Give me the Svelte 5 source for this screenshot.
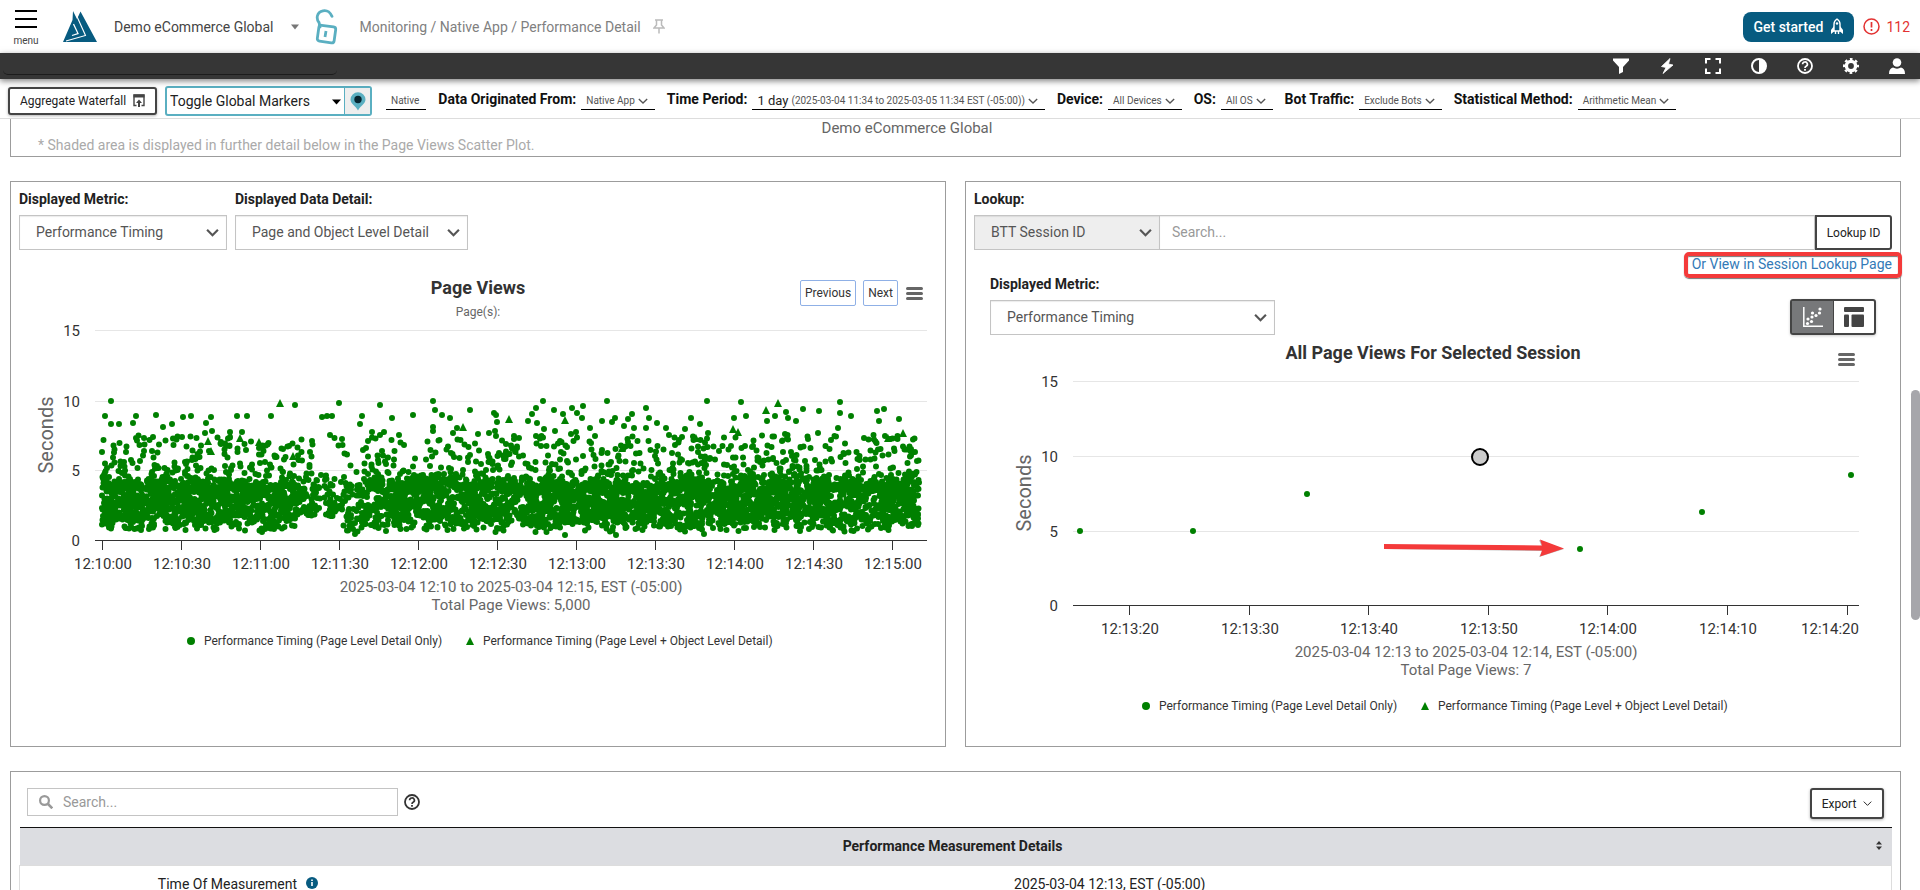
<script>
    let metric = $state("Performance Timing");
    let detail = $state("Page and Object Level Detail");
    let lookupType = $state("BTT Session ID");
    let sessionMetric = $state("Performance Timing");
    let marker = $state("Toggle Global Markers");
    let view = $state("chart");
    let lookup = $state("");
    let search = $state("");

    const filters = [
        { label: "Data Originated From:", value: "Native App" },
        { label: "Time Period:", lead: "1 day", value: "(2025-03-04 11:34 to 2025-03-05 11:34 EST (-05:00))" },
        { label: "Device:", value: "All Devices" },
        { label: "OS:", value: "All OS" },
        { label: "Bot Traffic:", value: "Exclude Bots" },
        { label: "Statistical Method:", value: "Arithmetic Mean" },
    ];

    const legend = [
        "Performance Timing (Page Level Detail Only)",
        "Performance Timing (Page Level + Object Level Detail)",
    ];

    // slowest and fastest views, in chart pixels
    const outliers = [
        [100,141],[94,156],[100,164],[108,164],[122,163],[125,156],[145,155],[152,167],[161,164],[172,157],
        [180,156],[195,163],[200,157],[194,173],[201,171],[219,172],[226,156],[236,156],[231,172],[260,156],
        [284,145],[328,143],[311,157],[316,156],[321,156],[351,156],[349,164],[369,145],[381,158],[361,172],
        [373,172],[402,155],[319,175],[422,141],[424,150],[431,155],[439,158],[459,150],[483,153],[485,155],
        [486,162],[422,167],[422,171],[446,168],[442,173],[467,174],[478,173],[484,171],[525,148],[521,154],
        [517,161],[526,163],[532,141],[543,150],[552,154],[561,148],[566,153],[572,146],[571,158],[596,141],
        [591,161],[604,158],[601,162],[621,154],[617,159],[613,166],[623,168],[635,148],[638,158],[635,168],
        [646,163],[655,168],[658,175],[674,169],[680,158],[689,164],[696,141],[697,173],[730,142],[723,158],
        [735,156],[756,161],[764,156],[775,152],[777,158],[785,161],[792,149],[808,151],[829,142],[829,153],
        [840,156],[827,168],[866,151],[868,161],[873,149],[888,159],[807,173],[774,174],[853,178],[579,168],
        [565,172],[560,174],[544,171],[533,169],[525,176],[554,275],[605,275],[693,274],[344,274],[251,272],
    ];
    const withObjects = [
        [269,143],[452,167],[93,212],[197,181],[200,191],[248,182],[229,178],[282,196],[498,159],[554,160],
        [767,143],[755,150],[722,169],[727,172],[892,173],[877,178],[685,178],[611,188],
    ];

    const dot = ([x, y], r = 3) => `M${x - r} ${y}a${r} ${r} 0 1 0 ${2 * r} 0a${r} ${r} 0 1 0 ${-2 * r} 0`;
    const triangle = ([x, y], r = 4) => `M${x} ${y - r}L${x + r} ${y + r}H${x - r}Z`;

    let seed = 20250304;
    const random = () => {
        seed = (seed * 1664525 + 1013904223) % 4294967296;
        return seed / 4294967296;
    };

    const buildCloud = () => {
        const points = [...outliers];
        while (points.length < 5000) {
            const x = 91 + random() * 817;
            let seconds;
            if (random() < 0.78) {
                seconds = 0.5 + (random() * 0.75 + random() * 0.25) * 4.2;
            } else {
                seconds = 3.6 + Math.pow(random(), 1.7) * 3.9;
            }
            // traffic thins out between 12:11:10 and 12:11:45
            const dip = Math.exp(-Math.pow((x - 322) / 36, 2));
            if (random() < dip * 0.66) continue;
            if (Math.abs(x - 308) < 22 && seconds < 1.7) continue;
            points.push([Math.round(x * 2) / 2, Math.round((280 - seconds * 14) * 2) / 2]);
        }
        return points.map((p) => dot(p)).join("");
    };

    const pageViews = {
        height: 400,
        title: "Page Views",
        titleY: 34,
        subtitle: "Page(s):",
        left: 84,
        right: 916,
        rows: [{ label: "15", y: 70 }, { label: "10", y: 141 }, { label: "5", y: 210 }, { label: "0", y: 280 }],
        ticks: ["12:10:00", "12:10:30", "12:11:00", "12:11:30", "12:12:00", "12:12:30", "12:13:00", "12:13:30", "12:14:00", "12:14:30", "12:15:00"]
            .map((label, i) => ({ label, x: 91 + i * 79 })),
        range: "2025-03-04 12:10 to 2025-03-04 12:15, EST (-05:00)",
        total: "Total Page Views: 5,000",
        dots: buildCloud(),
        triangles: withObjects.map((p) => triangle(p)).join(""),
    };

    const sessionViews = {
        height: 410,
        title: "All Page Views For Selected Session",
        titleY: 23,
        left: 107,
        right: 893,
        rows: [{ label: "15", y: 45 }, { label: "10", y: 120 }, { label: "5", y: 195 }, { label: "0", y: 269 }],
        ticks: ["12:13:20", "12:13:30", "12:13:40", "12:13:50", "12:14:00", "12:14:10", "12:14:20"]
            .map((label, i) => ({ label, x: Math.round(163 + i * 119.6) })),
        range: "2025-03-04 12:13 to 2025-03-04 12:14, EST (-05:00)",
        total: "Total Page Views: 7",
        dots: [[114,195],[227,195],[341,158],[614,213],[736,176],[885,139]].map((p) => dot(p)).join(""),
        triangles: "",
        selected: { x: 514, y: 121 },
    };
</script>

{#snippet chevron(size, weight = 1.6)}
    <svg class="chevron" width={size} height={size} viewBox="0 0 12 12" aria-hidden="true">
        <path d="M1 3.5l5 5 5-5" fill="none" stroke="currentColor" stroke-width={weight} />
    </svg>
{/snippet}

{#snippet help()}
    <svg width="16" height="16" viewBox="0 0 16 16" aria-hidden="true">
        <circle cx="8" cy="8" r="7" fill="none" stroke="currentColor" stroke-width="1.8" />
        <path d="M5.6 6.3a2.4 2.3 0 1 1 3.5 2C8.3 8.7 8 9 8 10" fill="none" stroke="currentColor" stroke-width="1.7" />
        <rect x="7.1" y="11" width="1.8" height="1.7" fill="currentColor" />
    </svg>
{/snippet}

{#snippet bars()}
    <svg width="17" height="14" viewBox="0 0 17 14" aria-hidden="true">
        <path d="M1.5 2.5H15.5M1.5 7.5H15.5M1.5 12.5H15.5" stroke="#666" stroke-width="3" stroke-linecap="round" />
    </svg>
{/snippet}

{#snippet chart(c)}
    <svg class="chart" viewBox="0 0 934 {c.height}" role="img" aria-label={c.title}>
        <text class="title" x="467" y={c.titleY}>{c.title}</text>
        {#if c.subtitle}
            <text class="subtitle" x="467" y={c.titleY + 22}>{c.subtitle}</text>
        {/if}
        {#each c.rows as row, i}
            <rect x={c.left} y={row.y} width={c.right - c.left} height="1" fill={i === 3 ? "#333" : "#e6e6e6"} />
            <text class="axis" x={c.left - 15} y={row.y + 6} text-anchor="end">{row.label}</text>
        {/each}
        {#each c.ticks as tick}
            <rect x={tick.x} y={c.rows[3].y} width="1" height="10" fill="#333" />
            <text class="axis" x={Math.min(tick.x + 1, c.right - 29)} y={c.rows[3].y + 29} text-anchor="middle">{tick.label}</text>
        {/each}
        <text class="seconds" transform="translate({c.left - 42} {(c.rows[0].y + c.rows[3].y) / 2}) rotate(-90)">Seconds</text>
        <path d={c.dots} fill="green" />
        <path d={c.triangles} fill="green" />
        {#if c.selected}
            <circle cx={c.selected.x} cy={c.selected.y} r="8" fill="#ccc" stroke="#000" stroke-width="2" />
            <path d="M419 209.5L576 211l-3-7 25 9-25 8 3-6-157-2z" fill="#777" opacity="0.5" />
            <path d="M418 208L576 209.5l-2-6 24 9-24 8 2-6L418 213z" fill="#f43a3a" />
        {/if}
        <text class="range" x={(c.left + c.right) / 2} y={c.rows[3].y + 52}>{c.range}</text>
        <text class="range" x={(c.left + c.right) / 2} y={c.rows[3].y + 70}>{c.total}</text>
        <path d={dot([180, c.rows[3].y + 101], 4)} fill="green" />
        <text class="key" x="193" y={c.rows[3].y + 105}>{legend[0]}</text>
        <path d={triangle([459, c.rows[3].y + 101])} fill="green" />
        <text class="key" x="472" y={c.rows[3].y + 105}>{legend[1]}</text>
    </svg>
{/snippet}

<div class="app">
    <header>
        <button class="menu">
            <svg width="22" height="18" viewBox="0 0 22 18" aria-hidden="true">
                <path d="M0 1h22M0 9h22M0 17h22" stroke="#000" stroke-width="2" />
            </svg>
            menu
        </button>
        <svg class="logo" width="34" height="31" viewBox="0 0 34 31" aria-label="Logo">
            <path d="M10 0l4 8 3.5-7.5L34 31H0L9.5 9z" fill="#075b80" />
            <path d="M11.5 0L22.5 24.5 3 30" fill="none" stroke="#fff" stroke-width="1.1" />
            <path d="M10.5 13L15 22.5 9 24.5" fill="none" stroke="#fff" stroke-width="1.3" />
        </svg>
        <button class="account">
            Demo eCommerce Global
            <svg width="8" height="6" viewBox="0 0 8 6" aria-hidden="true"><path d="M0 0.5h8L4 5.5z" fill="#777" /></svg>
        </button>
        <svg class="lock" width="23" height="36" viewBox="0 0 23 36" aria-label="Unlocked">
            <g fill="none" stroke="#5aafc1" stroke-width="2.8">
                <path d="M5 18L4 13.5C1 10 1.5 3 8 1.8c5-1 7 1.5 9 5.5" stroke-linecap="round" />
                <rect x="3" y="17" width="17" height="16" rx="2.5" transform="rotate(8 11 25)" />
                <path d="M11 22l-1 6" />
            </g>
        </svg>
        <nav aria-label="Breadcrumb">
            <span>Monitoring / Native App / Performance Detail</span>
            <svg width="12" height="15" viewBox="0 0 12 15" aria-hidden="true">
                <path d="M2 1h8M3.5 1v5L1 9h10L8.5 6V1M6 9v5.5" fill="none" stroke="#bbb" stroke-width="1.5" />
            </svg>
        </nav>
        <button class="start">
            Get started
            <svg width="14" height="17" viewBox="0 0 14 17" aria-hidden="true">
                <path d="M4 13V6c0-2.5 1.5-4 3-5 1.5 1 3 2.5 3 5v7zM5.5 13v3M8.5 13v3" fill="none" stroke="#fff" stroke-width="1.4" />
                <path d="M4 8L1 12v4l3-2.5zM10 8l3 4v4l-3-2.5z" fill="#fff" />
                <circle cx="7" cy="5.5" r="1.2" fill="#fff" />
            </svg>
        </button>
        <button class="alerts">
            <svg width="17" height="17" viewBox="0 0 17 17" aria-hidden="true">
                <circle cx="8.5" cy="8.5" r="7.5" fill="none" stroke="currentColor" stroke-width="1.5" />
                <path d="M8.5 4v5.5M8.5 11v2" stroke="currentColor" stroke-width="1.7" />
            </svg>
            112
        </button>
    </header>

    <div class="toolbar">
        <div class="tab"></div>
        <button aria-label="Filter">
            <svg width="16" height="16" viewBox="0 0 16 16"><path d="M0 0.5h16v2L10 9v5l-4 2V9L0 2.5z" fill="#fff" /></svg>
        </button>
        <button aria-label="Quick actions">
            <svg width="16" height="16" viewBox="0 0 16 16"><path d="M11 0.5L2.5 8.5 7 9.5 4 15.5 14 7 9.5 6z" fill="#fff" stroke="#fff" stroke-width="0.8" /></svg>
        </button>
        <button aria-label="Full screen">
            <svg width="16" height="16" viewBox="0 0 16 16"><path d="M1 5.5V1h4.5M10.5 1H15v4.5M15 10.5V15h-4.5M5.5 15H1v-4.5" fill="none" stroke="#fff" stroke-width="2" /></svg>
        </button>
        <button aria-label="Contrast">
            <svg width="16" height="16" viewBox="0 0 16 16"><circle cx="8" cy="8" r="7" fill="none" stroke="#fff" stroke-width="2" /><path d="M8 1a7 7 0 0 1 0 14z" fill="#fff" /></svg>
        </button>
        <button aria-label="Help">{@render help()}</button>
        <button aria-label="Settings">
            <svg width="16" height="16" viewBox="0 0 16 16">
                <circle cx="8" cy="8" r="4.6" fill="none" stroke="#fff" stroke-width="3.4" />
                <circle cx="8" cy="8" r="6.9" fill="none" stroke="#fff" stroke-width="2.2" stroke-dasharray="2.7 2.719" stroke-dashoffset="1.35" />
            </svg>
        </button>
        <button aria-label="Profile">
            <svg width="16" height="16" viewBox="0 0 16 16"><circle cx="8" cy="4.5" r="4.3" fill="#fff" /><path d="M0 16c0-4 1.5-6 4-6.5 2.5 1.5 5.5 1.5 8 0 2.5 0.5 4 2.5 4 6.5z" fill="#fff" /></svg>
        </button>
    </div>

    <div class="filters">
        <button class="outlined waterfall">
            Aggregate Waterfall
            <svg width="12" height="13" viewBox="0 0 12 13" aria-hidden="true">
                <path d="M3.5 11.5H1V1h10v10.5H8.5" fill="none" stroke="#444" stroke-width="1.4" />
                <path d="M0.5 0.5h11v3H0.5zM6 5.5L9 9H7v4H5V9H3z" fill="#444" />
            </svg>
        </button>
        <div class="markers">
            <select bind:value={marker} aria-label="Toggle Global Markers">
                <option>Toggle Global Markers</option>
            </select>
            <svg class="caret" width="9" height="6" viewBox="0 0 9 6" aria-hidden="true"><path d="M0 0.5h9L4.5 5.5z" /></svg>
            <button aria-label="Add marker">
                <svg width="16" height="19" viewBox="0 0 16 19">
                    <path d="M8 18.5C6 14 0.5 12 0.5 7.5a7.5 7.2 0 0 1 15 0C15.5 12 10 14 8 18.5z" fill="#5aafc1" />
                    <circle cx="8" cy="7.5" r="3.7" fill="#062530" />
                </svg>
            </button>
        </div>
        <span class="value">Native</span>
        {#each filters as filter}
            <div class="filter">
                <span class="name">{filter.label}</span>
                <button class="value" aria-label={filter.label}>
                    {#if filter.lead}<span class="lead">{filter.lead}</span>{/if}
                    {filter.value}
                    {@render chevron(10)}
                </button>
            </div>
        {/each}
    </div>

    <main>
        <section class="panel overview">
            <p class="caption">Demo eCommerce Global</p>
            <p class="note">* Shaded area is displayed in further detail below in the Page Views Scatter Plot.</p>
        </section>

        <div class="columns">
            <section class="panel">
                <div class="fields">
                    <div class="field">
                        <label for="metric">Displayed Metric:</label>
                        <div class="select metric">
                            <select id="metric" bind:value={metric}><option>Performance Timing</option></select>
                            {@render chevron(13, 2)}
                        </div>
                    </div>
                    <div class="field">
                        <label for="detail">Displayed Data Detail:</label>
                        <div class="select detail">
                            <select id="detail" bind:value={detail}><option>Page and Object Level Detail</option></select>
                            {@render chevron(13, 2)}
                        </div>
                    </div>
                </div>
                <div class="plot">
                    <div class="tools">
                        <button class="step">Previous</button>
                        <button class="step">Next</button>
                        <button class="context" aria-label="Chart menu">{@render bars()}</button>
                    </div>
                    {@render chart(pageViews)}
                </div>
            </section>

            <section class="panel">
                <div class="field lookup">
                    <label for="lookup">Lookup:</label>
                    <div class="lookup-row">
                        <div class="select type">
                            <select bind:value={lookupType} aria-label="Lookup type"><option>BTT Session ID</option></select>
                            {@render chevron(13, 2)}
                        </div>
                        <input id="lookup" type="text" placeholder="Search..." bind:value={lookup} />
                        <button class="outlined find">Lookup ID</button>
                    </div>
                </div>
                <div class="alternative">
                    <a href="#session-lookup">Or View in Session Lookup Page</a>
                </div>
                <div class="session-head">
                    <div class="field">
                        <label for="session-metric">Displayed Metric:</label>
                        <div class="select session">
                            <select id="session-metric" bind:value={sessionMetric}><option>Performance Timing</option></select>
                            {@render chevron(13, 2)}
                        </div>
                    </div>
                    <div class="views">
                        <button class:active={view === "chart"} onclick={() => (view = "chart")} aria-label="Chart view">
                            <svg width="20" height="20" viewBox="0 0 20 20">
                                <path d="M0.8 0v19.2H20" fill="none" stroke="currentColor" stroke-width="1.5" />
                                <g fill="currentColor">
                                    <circle cx="4.5" cy="16.5" r="1.6" /><circle cx="5" cy="12" r="1.6" />
                                    <circle cx="8.5" cy="14.5" r="1.6" /><circle cx="9" cy="10" r="1.6" />
                                    <circle cx="9.5" cy="6" r="1.6" /><circle cx="13" cy="8.5" r="1.6" />
                                    <circle cx="16.5" cy="6" r="1.6" /><circle cx="17" cy="2" r="1.6" />
                                </g>
                            </svg>
                        </button>
                        <button class:active={view === "table"} onclick={() => (view = "table")} aria-label="Table view">
                            <svg width="20" height="20" viewBox="0 0 20 20">
                                <g fill="currentColor">
                                    <rect width="20" height="5" rx="1" /><rect y="7.5" width="5" height="12.5" rx="1" />
                                    <rect x="7.5" y="7.5" width="12.5" height="12.5" rx="1" />
                                </g>
                            </svg>
                        </button>
                    </div>
                </div>
                <div class="plot">
                    <div class="tools session-tools">
                        <button class="context" aria-label="Chart menu">{@render bars()}</button>
                    </div>
                    {@render chart(sessionViews)}
                </div>
            </section>
        </div>

        <section class="panel details">
            <div class="details-head">
                <div class="search">
                    <svg width="14" height="14" viewBox="0 0 14 14" aria-hidden="true">
                        <circle cx="5.5" cy="5.5" r="4.4" fill="none" stroke="#999" stroke-width="2.2" />
                        <path d="M9 9l4.3 4.3" stroke="#999" stroke-width="2.6" />
                    </svg>
                    <input type="text" placeholder="Search..." aria-label="Search measurements" bind:value={search} />
                </div>
                <button class="about" aria-label="About this table">{@render help()}</button>
                <button class="outlined export">Export {@render chevron(9, 1.3)}</button>
            </div>
            <table>
                <thead>
                    <tr>
                        <th colspan="2">
                            <div class="heading">
                                <span>Performance Measurement Details</span>
                                <svg width="6" height="9" viewBox="0 0 6 9" aria-hidden="true"><path d="M3 0l3 3.5H0zM3 9L0 5.5h6z" fill="#333" /></svg>
                            </div>
                        </th>
                    </tr>
                </thead>
                <tbody>
                    <tr>
                        <td class="measure">
                            Time Of Measurement
                            <svg width="12" height="12" viewBox="0 0 12 12" aria-hidden="true">
                                <circle cx="6" cy="6" r="6" fill="#075b80" />
                                <path d="M6 2.5v1.5M6 5v4" stroke="#fff" stroke-width="1.6" />
                            </svg>
                        </td>
                        <td class="reading">2025-03-04 12:13, EST (-05:00)</td>
                    </tr>
                </tbody>
            </table>
        </section>
    </main>
    <div class="thumb"></div>
</div>

<style>
    :global(body) {
        overflow: hidden;
        background: #fff;
    }
    .app {
        position: relative;
        display: flex;
        flex-direction: column;
        height: 100vh;
        overflow: hidden;
        font: 14px/18px Roboto, sans-serif;
        color: #222;
    }
    button, select, input {
        font: inherit;
        color: inherit;
        margin: 0;
        box-sizing: border-box;
    }
    button {
        padding: 0;
        border: 0;
        background: none;
        white-space: nowrap;
    }
    p {
        margin: 0;
    }
    svg {
        flex: none;
    }
    header {
        display: flex;
        flex: none;
        align-items: center;
        height: 53px;
        padding: 0 10px 0 14px;
        box-sizing: border-box;
    }
    .menu {
        display: flex;
        flex-direction: column;
        align-items: center;
        gap: 6px;
        width: 24px;
        padding-top: 5px;
        font-size: 10px;
        line-height: 14px;
        color: #444;
    }
    .logo {
        margin-left: 25px;
    }
    .account {
        display: flex;
        align-items: center;
        gap: 17px;
        margin-left: 17px;
        color: #444;
    }
    .lock {
        margin-left: 16px;
    }
    nav {
        display: flex;
        align-items: center;
        gap: 12px;
        margin-left: 22px;
        color: #808080;
    }
    .start {
        display: flex;
        align-items: center;
        gap: 7px;
        height: 30px;
        margin-left: auto;
        padding: 0 10px;
        border-radius: 8px;
        background: #075b80;
        color: #fff;
        font-weight: 500;
    }
    .alerts {
        display: flex;
        align-items: center;
        gap: 6px;
        margin-left: 9px;
        color: #e33232;
    }
    .toolbar {
        position: relative;
        z-index: 2;
        display: flex;
        flex: none;
        align-items: center;
        justify-content: flex-end;
        gap: 30px;
        height: 26px;
        padding-right: 15px;
        background: #363636;
        box-shadow: 0 2px 6px rgba(0, 0, 0, 0.5);
        color: #fff;
    }
    .toolbar button {
        display: flex;
    }
    .tab {
        width: 334px;
        height: 18px;
        margin: 0 auto 0 3px;
        border-bottom: 1px solid #1c1c1c;
        border-radius: 0 0 5px 5px;
        box-sizing: border-box;
    }
    .filters {
        display: flex;
        flex: none;
        align-items: center;
        gap: 12px;
        height: 40px;
        padding-left: 8px;
        border-bottom: 1px solid #ddd;
        box-sizing: border-box;
        white-space: nowrap;
    }
    .outlined {
        display: flex;
        align-items: center;
        justify-content: center;
        border: 2px solid #444;
        border-radius: 3px;
        background: #fff;
        font-size: 12px;
        box-shadow: 0 1px 3px rgba(0, 0, 0, 0.3);
    }
    .waterfall {
        gap: 7px;
        width: 149px;
        height: 28px;
        margin-top: 4px;
        margin-right: -4px;
    }
    .markers {
        position: relative;
        display: flex;
        width: 207px;
        height: 30px;
        margin-top: 5px;
        margin-right: 2px;
        border: 2px solid #5aafc1;
        border-radius: 3px;
        box-sizing: border-box;
    }
    .markers select {
        flex: 1;
        padding: 0 24px 0 3px;
        border: 0;
        background: none;
        appearance: none;
    }
    .caret {
        position: absolute;
        top: 11px;
        right: 29px;
    }
    .markers button {
        display: flex;
        align-items: center;
        justify-content: center;
        width: 26px;
        border-left: 1px solid #5aafc1;
        background: #eee;
    }
    .filter {
        display: flex;
        align-items: center;
        gap: 5px;
    }
    .name {
        font-weight: 700;
        color: #111;
    }
    .value {
        display: flex;
        align-items: center;
        gap: 3px;
        height: 20px;
        padding: 4px 7px 0 5px;
        margin-top: 2px;
        border-bottom: 1px solid #000;
        box-sizing: border-box;
        font-size: 10px;
        color: #555;
    }
    .lead {
        font-size: 13px;
        color: #222;
    }
    main {
        flex: 1;
        min-height: 0;
        padding: 0 19px 0 10px;
        overflow: hidden;
    }
    .panel {
        border: 1px solid #9c9c9c;
        box-sizing: border-box;
    }
    .overview {
        border-top: 0;
        height: 38px;
    }
    .caption {
        padding-right: 97px;
        text-align: center;
        font-size: 15px;
        color: #666;
    }
    .note {
        padding-left: 27px;
        line-height: 16px;
        color: #aaa;
    }
    .columns {
        display: flex;
        gap: 19px;
        margin: 24px 0;
    }
    .columns .panel {
        flex: 1;
        min-width: 0;
    }
    .fields {
        display: flex;
        gap: 8px;
        padding: 8px 8px 10px;
    }
    .field {
        display: flex;
        flex-direction: column;
        gap: 7px;
    }
    .field label {
        font-weight: 700;
    }
    .select {
        position: relative;
        height: 35px;
    }
    .select select {
        width: 100%;
        height: 100%;
        padding: 0 30px 1px 16px;
        border: 1px solid #c4c4c4;
        border-radius: 0;
        background: #fff;
        box-shadow: inset 0 1px 1px rgba(0, 0, 0, 0.08);
        color: #555;
        appearance: none;
    }
    .select :global(.chevron) {
        position: absolute;
        top: 11px;
        right: 8px;
        color: #555;
        pointer-events: none;
    }
    .metric {
        width: 208px;
    }
    .detail {
        width: 233px;
    }
    .session {
        width: 285px;
    }
    .type {
        width: 186px;
    }
    .type select {
        background: #eee;
    }
    .plot {
        position: relative;
    }
    .chart {
        display: block;
        width: 100%;
        font-family: Roboto, sans-serif;
    }
    .title {
        font-size: 18px;
        font-weight: 700;
        fill: #333;
        text-anchor: middle;
    }
    .subtitle {
        font-size: 12px;
        fill: #666;
        text-anchor: middle;
    }
    .axis {
        font-size: 15px;
        fill: #333;
    }
    .seconds {
        font-size: 20px;
        fill: #666;
        text-anchor: middle;
    }
    .range {
        font-size: 15px;
        fill: #666;
        text-anchor: middle;
    }
    .key {
        font-size: 12px;
        fill: #333;
    }
    .tools {
        position: absolute;
        top: 20px;
        right: 22px;
        display: flex;
        align-items: center;
        gap: 7px;
    }
    .session-tools {
        top: 16px;
        right: 45px;
    }
    .step {
        height: 26px;
        padding: 0 4px;
        border: 1px solid #8fb0e6;
        border-radius: 2px;
        font-size: 12px;
        color: #333;
    }
    .step + .context {
        margin-left: 1px;
    }
    .context {
        display: flex;
    }
    .lookup {
        padding: 8px 8px 0;
    }
    .lookup-row {
        display: flex;
    }
    .lookup-row input {
        flex: 1;
        min-width: 0;
        height: 35px;
        margin-left: -1px;
        padding: 0 12px 1px;
        border: 1px solid #c4c4c4;
        box-shadow: inset 0 1px 1px rgba(0, 0, 0, 0.08);
    }
    input::placeholder {
        color: #999;
        opacity: 1;
    }
    .find {
        width: 77px;
        height: 35px;
        border-radius: 0 3px 3px 0;
        box-shadow: none;
    }
    .alternative {
        display: flex;
        justify-content: flex-end;
        padding: 5px 8px 0;
    }
    .alternative a {
        position: relative;
        color: #337ab7;
        text-decoration: none;
    }
    .alternative a::after {
        content: "";
        position: absolute;
        inset: -3px -10px -5px -8px;
        border: 4px solid #f43a3a;
        border-radius: 5px;
        box-shadow: 0 1px 1px #777, inset 0 1px 1px #777;
    }
    .session-head {
        display: flex;
        align-items: flex-end;
        justify-content: space-between;
        padding: 2px 24px 1px;
    }
    .views {
        display: flex;
        border: 2px solid #444;
        border-radius: 3px;
        box-shadow: 0 1px 3px rgba(0, 0, 0, 0.2);
    }
    .views button {
        display: flex;
        align-items: center;
        justify-content: center;
        width: 41px;
        height: 32px;
        color: #444;
    }
    .views button + button {
        border-left: 1px solid #444;
    }
    .views .active {
        background: #77787a;
        color: #fff;
    }
    .details {
        height: 400px;
        padding: 16px 8px;
    }
    .details-head {
        display: flex;
        align-items: flex-start;
        height: 39px;
        padding: 0 8px;
    }
    .search {
        display: flex;
        align-items: center;
        gap: 10px;
        width: 371px;
        height: 28px;
        padding: 0 11px;
        border: 1px solid #c4c4c4;
        box-sizing: border-box;
    }
    .search input {
        flex: 1;
        padding: 0;
        border: 0;
        outline: 0;
    }
    .about {
        display: flex;
        margin: 6px;
        color: #333;
    }
    .export {
        gap: 7px;
        width: 74px;
        height: 31px;
        margin-left: auto;
    }
    table {
        width: 100%;
        border-collapse: collapse;
    }
    th {
        height: 38px;
        padding: 0 10px 2px;
        border-top: 1px solid #111;
        background: #dcdde1;
        box-sizing: border-box;
    }
    .heading {
        display: flex;
        align-items: center;
    }
    .heading span {
        flex: 1;
    }
    td {
        height: 37px;
        padding: 0 11px;
        border: 1px solid #ddd;
        border-width: 1px 0;
        box-sizing: border-box;
    }
    .measure {
        width: 309px;
        border-left-width: 1px;
        text-align: right;
    }
    .measure svg {
        margin-left: 5px;
    }
    .reading {
        border-right-width: 1px;
        text-align: center;
    }
    .thumb {
        position: absolute;
        top: 390px;
        right: 0;
        width: 9px;
        height: 230px;
        border-radius: 5px;
        background: #a6a6ab;
    }
</style>
